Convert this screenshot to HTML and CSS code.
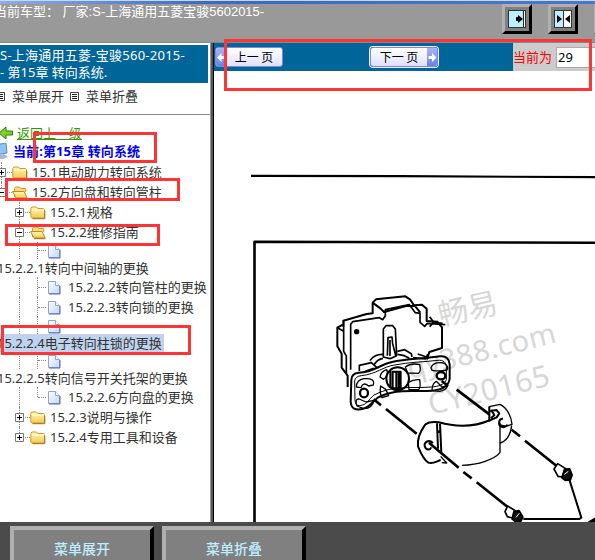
FILE: index.html
```html
<!DOCTYPE html>
<html lang="zh-CN">
<head>
<meta charset="utf-8">
<title>维修手册</title>
<link rel="stylesheet" href="styles.css">
</head>
<body>
<svg class="defs" width="0" height="0">
  <defs>
    <linearGradient id="gold" x1="0" y1="0" x2="0" y2="1"><stop offset="0" stop-color="#fff8b8"/><stop offset="1" stop-color="#f0cc50"/></linearGradient>
    <linearGradient id="paper" x1="0" y1="0" x2="1" y2="1"><stop offset="0" stop-color="#fff"/><stop offset="1" stop-color="#c3d6fa"/></linearGradient>
    <symbol id="folder" viewBox="0 0 16 16"><path d="M.800 13V4.500l1-1.500h4.700l1.300 1.500h5.700l1 1V13l-1 1H1.800z" fill="url(#gold)" stroke="#cf9a28"/><path d="M2 6.200h11.500" stroke="#fffbe0"/><path d="M2.500 14.700h12.300V7" fill="none" stroke="#9a7018"/></symbol>
    <symbol id="open" viewBox="0 0 16 16"><path d="M2.500 13V4.500L3.500 3h4l1.200 1.500h5V8" fill="#f6dc80" stroke="#cf9a28"/><path d="M.600 7.500h11.500l3 6.500H4z" fill="url(#gold)" stroke="#bd8b20"/><path d="M4 14.700h11.500" stroke="#9a7018"/></symbol>
    <symbol id="doc" viewBox="0 0 16 16"><path d="M2.500 2.500h7l4 4v8h-11z" fill="url(#paper)" stroke="#8fa5d8"/><path d="M9.500 2.500v4h4" fill="#fff" stroke="#8fa5d8"/><path d="M3 15h11V7" fill="none" stroke="#5568a8"/></symbol>
    <symbol id="plus" viewBox="0 0 9 9"><path d="M.5.5h8v8h-8z" fill="#fff" stroke="#777"/><path d="M2 4.500h5M4.500 2v5" stroke="#000"/></symbol>
    <symbol id="minus" viewBox="0 0 9 9"><path d="M.5.5h8v8h-8z" fill="#fff" stroke="#777"/><path d="M2 4.500h5" stroke="#000"/></symbol>
    <symbol id="list" viewBox="0 0 9 9"><path d="M.5.5h8v8h-8z" fill="#fff" stroke="#444"/><path d="M2 2.500h5M2 4.500h5M2 6.500h5" stroke="#222"/></symbol>
  </defs>
</svg>

<header class="top">
  <div class="model">当前车型： 厂家:S-上海通用五菱宝骏5602015-</div>
  <div class="tools">
    <button class="tool"><svg width="18" height="18"><path d="M0 0h18v18H0z" fill="#333"/><path d="M1 1h14v16H1z" fill="#bdefff"/><path d="M15 1h1v16h-1z" fill="#222"/><path d="M16 1h1v16h-1z" fill="#fff"/><path d="M8 7h2V5l5 4-5 4v-2H8z"/></svg></button>
    <button class="tool"><svg width="18" height="18"><path d="M0 0h18v18H0z" fill="#333"/><path d="M1 1h8v16H1z" fill="#bdefff"/><path d="M10 1h7v16h-7z" fill="#fff"/><path d="M3 5l5 4-5 4zM16 5l-5 4 5 4z"/></svg></button>
    <button class="tool"><svg width="18" height="18"><path d="M0 0h18v18H0z" fill="#333"/></svg></button>
  </div>
</header>

<main class="frames">
  <aside class="side">
    <h1 class="title">S-上海通用五菱-宝骏560-2015-<br><span>- 第15章 转向系统.</span></h1>
    <div class="links">
      <svg width="9" height="9"><use href="#list"/></svg><span>菜单展开</span>
      <svg width="9" height="9"><use href="#list"/></svg><span>菜单折叠</span>
    </div>
    <div class="tree">
      <div class="row back"><svg width="13" height="14"><path d="M12.500 5v4H6v4L-1 7l7-6v4z" fill="#7ed321" stroke="#287a10"/></svg><a>返回上一级</a></div>
      <div class="row current"><svg width="9" height="16"><path d="M-5 2l11-2 1 10-12 2z" fill="#8cc5f5" stroke="#5c8ac8"/><path d="M-2 12l6-1 4 3-5 2h-5z" fill="#a8b8cf"/></svg><b>当前:第15章 转向系统</b></div>

      <div class="row l1"><i class="line"></i><svg class="box" width="9" height="9"><use href="#plus"/></svg><i class="dots"></i><svg width="16" height="16"><use href="#folder"/></svg><span>15.1电动助力转向系统</span></div>
      <div class="row l1"><i class="line half"></i><svg class="box" width="9" height="9"><use href="#minus"/></svg><i class="dots"></i><svg width="16" height="16"><use href="#open"/></svg><span>15.2方向盘和转向管柱</span></div>
      <div class="row l2"><i class="line"></i><svg class="box" width="9" height="9"><use href="#plus"/></svg><i class="dots"></i><svg width="16" height="16"><use href="#folder"/></svg><span>15.2.1规格</span></div>
      <div class="row l2"><i class="line"></i><svg class="box" width="9" height="9"><use href="#minus"/></svg><i class="dots"></i><svg width="16" height="16"><use href="#open"/></svg><span>15.2.2维修指南</span></div>

      <div class="row l3 short"><i class="line"></i><i class="line inner"></i><i class="dots"></i><svg width="16" height="16"><use href="#doc"/></svg></div>
      <div class="wrap"><span>15.2.2.1转向中间轴的更换</span></div>
      <div class="row l3"><i class="line"></i><i class="line inner"></i><i class="dots"></i><svg width="16" height="16"><use href="#doc"/></svg><span>15.2.2.2转向管柱的更换</span></div>
      <div class="row l3"><i class="line"></i><i class="line inner"></i><i class="dots"></i><svg width="16" height="16"><use href="#doc"/></svg><span>15.2.2.3转向锁的更换</span></div>
      <div class="row l3 short"><i class="line"></i><i class="line inner"></i><i class="dots"></i><svg width="16" height="16"><use href="#doc"/></svg></div>
      <div class="wrap"><span class="selected">15.2.2.4电子转向柱锁的更换</span></div>
      <div class="row l3 short"><i class="line"></i><i class="line inner"></i><i class="dots"></i><svg width="16" height="16"><use href="#doc"/></svg></div>
      <div class="wrap"><span>15.2.2.5转向信号开关托架的更换</span></div>
      <div class="row l3"><i class="line"></i><i class="line inner half"></i><i class="dots"></i><svg width="16" height="16"><use href="#doc"/></svg><span>15.2.2.6方向盘的更换</span></div>
      <div class="row l2"><i class="line"></i><svg class="box" width="9" height="9"><use href="#plus"/></svg><i class="dots"></i><svg width="16" height="16"><use href="#folder"/></svg><span>15.2.3说明与操作</span></div>
      <div class="row l2"><i class="line half"></i><svg class="box" width="9" height="9"><use href="#plus"/></svg><i class="dots"></i><svg width="16" height="16"><use href="#folder"/></svg><span>15.2.4专用工具和设备</span></div>
    </div>
  </aside>
  <div class="splitter"></div>
  <section class="content">
    <div class="pager">
      <div class="nav">
        <button class="page prev"><i><svg width="9" height="9"><path d="M0 4.500L4.500 0v3H8v3H4.500v3z" fill="#fff"/></svg></i><span>上一 页</span></button>
        <button class="page next"><span>下一 页</span><i><svg width="9" height="9"><path d="M8.500 4.500L4 0v3H.5v3H4v3z" fill="#fff"/></svg></i></button>
      </div>
      <div class="goto"><label>当前为</label><div class="num">29</div></div>
    </div>
    <svg class="drawing" width="381" height="451" viewBox="214 71 381 451">
      <g class="mark">
        <text transform="translate(441 326) rotate(-13)" font-size="30">畅易</text>
        <text transform="translate(410 379) rotate(-14)" font-size="29" textLength="152">qy388.com</text>
        <text transform="translate(431 415) rotate(-14)" font-size="30" textLength="124">CY20165</text>
      </g>
      <g class="ink">
        <path d="M251 175.800L400 176.200 595 177.200" stroke-width="2.200"/>
        <path d="M254.500 522V241.800L595 242.700" stroke-width="2.600"/>
      </g>
      <!-- housing and mounting bracket -->
      <g class="ink" transform="translate(330 285) scale(.33333)">
        <path d="M40 125V107l70-20 18-2V53l10-10 88-9 14 9 12 18 24-2 14 12v37l32 2 14 17v62l-38 12-7 22M40 118l-18 10v56l13 22v42l18 24v34M128 53l24 18 10 10 66-18h27l16 20"/>
        <path d="M62 254V118l6-8 80-12 10 6 8-12V74l72-15 18 24 14 2v27l14 12 8-9 54 4M299 95l12 17 27 3M311 112l-12 13M22 128l18 10 1 4M41 109v90l8 14v54" stroke-width="5"/>
        <circle cx="80" cy="140" r="5" fill="#000"/>
        <path d="M160 216V132l8-10h20l8 10 4 80-20 9zM172 212l2-54 12-2 2 20 9 36M180 165v48" stroke-width="5"/>
        <path d="M120 227c10-16 22-20 40-19M133 238c6-10 12-16 26-18M202 199l22-5 20 12 2 10M203 208l20 4 15 8M88 258v-17l36-8 16 14M106 259l25-9M263 207l27 9 3-9M249 218l40 4" stroke-width="5"/>
        <path d="M64 284c1-14 8-20 22-21 46-1 62-24 100-32 40-9 100-10 144-17 18-3 28 8 29 24v43c-3 24-28 34-53 36-59 5-108-9-164 22-12 9-20 25-42 32-24 6-36 0-38-20z"/>
        <path d="M74 288c1-10 9-15 20-16 46-5 65-27 100-32 44-9 90-9 130-14 16-2 24 7 25 19v39c-4 14-24 21-45 22-58 5-115-7-172 24-15 13-22 27-34 30-16 4-22 1-23-15z" stroke-width="3"/>
        <circle cx="203" cy="281" r="34"/>
        <path d="M188 260h24v50h-24zM199 259v52M206 258v51M181 257v52" stroke-width="6"/>
        <path d="M226 246q17-13 43-7 5 20-3 26l-33-1zM235 292q16-10 34-8 4 25-3 29l-29 1zM150 276q3-17 20-22 8 16-9 29zM152 303l15 10 9 19-20 6q-8-13-4-35zM303 248q8-19 38-14 17 10 10 21-23 5-45 1zM306 317q0-22 13-28l17 17q9-2 18-5-6 16-26 18zM79 306q0-21 23-25 34-3 28 19l-14 3q-17-14-23 5zM81 363q-8-22 7-21l20 9 24-5q-5 24-30 25z" stroke-width="4"/>
        <ellipse cx="333" cy="272" rx="13" ry="11" stroke-width="7"/><ellipse cx="102" cy="324" rx="12" ry="13" stroke-width="7"/>
      </g>
      <!-- clamp, axes and screws -->
      <g class="ink" transform="translate(320 390) scale(.33333)">
        <path d="M161 28l22 18M198 57l92 74M327 158l89 75M430 246l25 19M470 277l94 75M365 -27L381 -15M410 -1l98 74M575 119l25 20M615 152l95 76" stroke-width="8"/>
        <path d="M508 73V50l32-7c22 11 34 37 36 60-15 5-19 7-35 2M575 107c-3 24-14 45-34 52M540 98v90c-17 20-64 37-114 38M362 199l18 20-15-1" stroke-width="4"/>
        <path d="M316 103c10-7 25-8 40-6 58 16 114 11 155-7M316 103c-17 24-25 44-22 66 8 20 17 40 31 49 15 5 26-5 37-8"/>
        <path d="M508 50v42l22-10 8-12-9-10-18 4M514 59l9 17-10 8M549 86c-13-1-16 19-5 24 7 3 15 1 18-6M351 100l3 76M360 101l4 87M353 124l8 2M339 159c-12-11-27-4-25 9 3 12 15 14 20 4" stroke-width="6"/>
        <path d="M702 237l11-16 24 15-10 25-13-2zM555 365l8-17 23 14-9 22-15-4z" fill="#fff" stroke-width="5"/>
        <path d="M726 263l8-25 15-1 7 18-5 14-15 2zM577 387l5-22 15-3 11 19-6 13-14 2z" fill="#111"/>
        <path d="M733 253l12-9M588 382l10-12" stroke="#fff" stroke-width="3"/>
        <path d="M748 269l36 114-6 4H610" stroke-width="6"/><path d="M806 397l19-11v11z" fill="#000"/>
      </g>
    </svg>
  </section>
</main>

<footer class="bottom">
  <button>菜单展开</button>
  <button>菜单折叠</button>
</footer>

<div class="note note-pager"></div>
<div class="note note-chapter"></div>
<div class="note note-section"></div>
<div class="note note-guide"></div>
<div class="note note-item"></div>
</body>
</html>
```
FILE: styles.css
```css
* { box-sizing: border-box; }
body {
  margin: 0;
  width: 595px;
  height: 560px;
  overflow: hidden;
  position: relative;
  display: flex;
  flex-direction: column;
  background: #fff;
  color: #333;
  font: 13px/18px "Noto Sans", "Noto Sans CJK SC", sans-serif;
  white-space: nowrap;
}
svg { display: block; flex: none; }
button { padding: 0; margin: 0; }
.defs { position: absolute; }

.top {
  height: 43px;
  flex: none;
  display: flex;
  justify-content: space-between;
  background: linear-gradient(90deg, #8eaee4, #3d68bf 35%, #4b74cb 90%) 0 1px / 100% 3px no-repeat, linear-gradient(#c8d8f0, #c8d8f0) 0 0 / 100% 1px no-repeat, #999;
  border-bottom: 1px solid #888;
  overflow: hidden;
}
.model {
  margin: 3px 0 0 -6px;
  color: #fff;
  font-family: "Liberation Sans", "Noto Sans CJK SC", sans-serif;
}
.tools { display: flex; gap: 16px; margin: 4px -29px 0 0; }
.tool {
  width: 30px;
  height: 30px;
  flex: none;
  display: flex;
  align-items: center;
  justify-content: center;
  background: #808080;
  border: 3px solid;
  border-color: #b0b0b0 #000 #000 #b0b0b0;
}

.frames { flex: 1; min-height: 0; display: flex; }
.side { width: 210px; padding-top: 2px; overflow: hidden; }
.title {
  margin: 0;
  width: 208px;
  height: 38px;
  padding: 2px 0 0;
  background: #069;
  color: #fff;
  font-size: 13px;
  line-height: 17px;
  font-weight: 400;
  letter-spacing: .25px;
}
.title span { letter-spacing: 0; }
.links {
  height: 32px;
  display: flex;
  align-items: center;
  gap: 6px;
  padding-bottom: 5px;
  margin-left: -4px;
  border-bottom: 1px solid #888;
}
.links span { width: 52px; margin-left: 1px; }

.tree { padding-top: 9px; }
.row { position: relative; display: flex; align-items: center; height: 20px; }
.row.back { height: 18px; gap: 4px; }
.back a { color: #390; text-decoration: underline; }
.row.current { height: 17px; gap: 4px; margin-bottom: 3px; color: #00e; }
.current b { font-size: 13px; letter-spacing: .1px; }
.l1 { padding-left: 7px; }
.l2 { padding-left: 25px; }
.l3 { padding-left: 38px; }
.row span { margin-left: 4px; }
.l3 span { margin-left: 6px; }
.row.short { height: 17px; }
.wrap { height: 18px; margin-left: -3px; }
.wrap span { display: inline-block; }
.selected { background: #bfd2ee; padding-right: 2px; }
.dots { width: 5px; border-top: 1px dotted #888; }
.l3 .dots { width: 8px; }
.line {
  position: absolute;
  top: 0;
  bottom: 0;
  left: 19px;
  border-left: 1px dotted #888;
}
.l1 .line { left: 1px; }
.line.inner { left: 37px; }
.line.half { bottom: 50%; }
.box { position: absolute; left: 15px; }
.l1 .box { left: -3px; }

.splitter {
  width: 4px;
  background: linear-gradient(90deg, #999 1px, #555 1px 3px, #000 3px);
}
.content { width: 381px; display: flex; flex-direction: column; }
.pager { height: 28px; display: flex; }
.nav {
  width: 299px;
  background: #069;
  display: flex;
  align-items: center;
  gap: 87px;
  padding-left: 1px;
}
.page {
  width: 68px;
  height: 20px;
  display: flex;
  border: 1px solid #8585dc;
  border-radius: 3px;
  background: linear-gradient(#fff, #e0e0fc);
  overflow: hidden;
  color: #000;
  font: 12px/17px "Noto Sans CJK SC", sans-serif;
}
.page span { flex: 1; text-align: center; }
.page i {
  width: 10px;
  background: linear-gradient(#a8b4f4, #6685e0);
  display: flex;
  align-items: center;
  justify-content: center;
}
.next { box-shadow: 0 0 0 1px #eef; }
.goto { width: 82px; display: flex; align-items: center; background: #ccc; overflow: hidden; }
.goto label { color: red; width: 43px; flex: none; }
.num {
  flex: none;
  width: 60px;
  height: 21px;
  padding-left: 1px;
  border: 1px solid #aaa;
  background: #fff;
  color: #000;
}
.drawing { background: #fff; }
.ink { fill: none; stroke: #000; stroke-width: 6; stroke-linejoin: round; }
.mark { fill: #d7d7d7; font-family: "Noto Sans", "Noto Sans CJK SC", sans-serif; }

.bottom {
  height: 38px;
  flex: none;
  display: flex;
  gap: 8px;
  padding: 4px 10px 0;
  background: #4b4b4b;
  overflow: hidden;
}
.bottom button {
  width: 144px;
  height: 44px;
  flex: none;
  background: #808080;
  border: 4px solid;
  border-color: #b0b0b0 #000 #000 #b0b0b0;
  color: #bdefff;
  font: 500 14px/32px "Noto Sans CJK SC", sans-serif;
}

.note { position: absolute; border: 3px solid #ff3535; }
.note-pager { left: 224px; top: 39px; width: 368px; height: 52px; }
.note-chapter { left: 33px; top: 132px; width: 124px; height: 31px; }
.note-section { left: 5px; top: 178px; width: 175px; height: 23px; }
.note-guide { left: 5px; top: 224px; width: 155px; height: 22px; }
.note-item { left: 1px; top: 325px; width: 190px; height: 30px; }
```
